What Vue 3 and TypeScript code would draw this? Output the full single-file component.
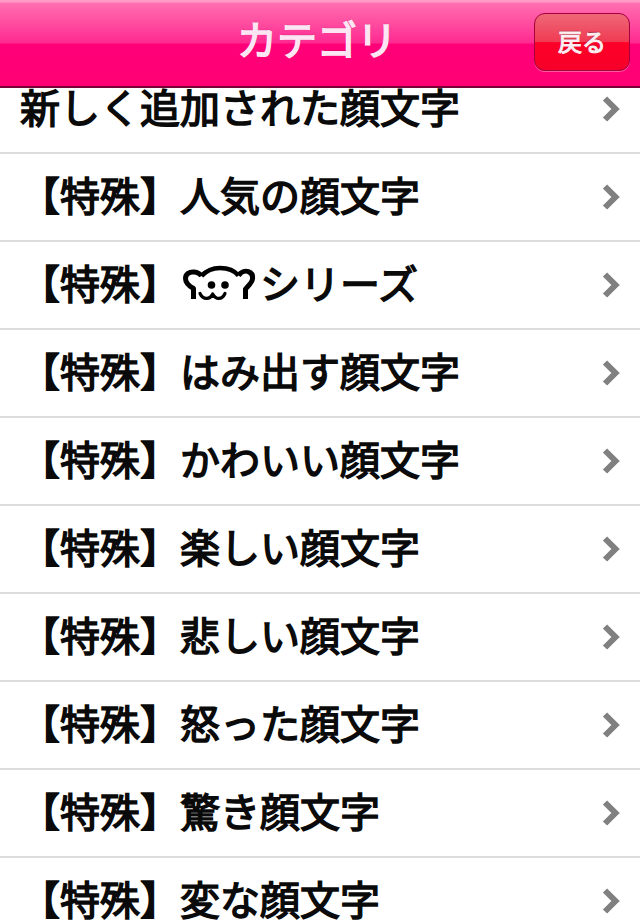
<script setup lang="ts">
const rows: string[] = [
  '【特殊】人気の顔文字',
  '【特殊】|シリーズ',
  '【特殊】はみ出す顔文字',
  '【特殊】かわいい顔文字',
  '【特殊】楽しい顔文字',
  '【特殊】悲しい顔文字',
  '【特殊】怒った顔文字',
  '【特殊】驚き顔文字',
  '【特殊】変な顔文字',
]
</script>

<template>
  <div class="page">
    <header class="bar">
      <h1 class="title">カテゴリ</h1>
      <button class="back" type="button">戻る</button>
    </header>
    <div class="viewport">
      <ul class="list">
        <li class="row">
          <span class="label">新しく追加された顔文字</span>
          <svg class="chev" viewBox="0 0 18 26"><path d="M3 2.5l10.5 10.5L3 23.5" /></svg>
        </li>
        <li v-for="r in rows" :key="r" class="row">
          <span class="label">
            <template v-if="r.includes('|')">
              {{ r.split('|')[0] }}<svg class="face" viewBox="0 0 80 40" role="img" aria-label="顔文字">
                <g fill="none" stroke="#000" stroke-linejoin="round">
                  <path stroke-width="5" d="M13.5 34V23.5C10 21.5 5.5 18.5 5.5 13.5C5.5 9 9.5 6.5 14 7C17 7.3 20 8.5 21.5 11" />
                  <path stroke-width="4.6" d="M21.5 11C27 5 34 3 40 3C47 3 54 5 58.5 10.5" />
                  <path stroke-width="5" d="M58.5 10.5C61 7 65 5.5 68 6.5C71.5 7.5 73 10 72.5 14C72 18 68 21 65.5 24V34" />
                  <path stroke-width="3.2" stroke-linecap="round" d="M20 28.5C23 35 30 35 32.7 29C36 35 42 35 45 28.5" />
                </g>
                <circle cx="31.5" cy="20" r="3.8" />
                <circle cx="45" cy="20" r="3.8" />
              </svg>{{ r.split('|')[1] }}
            </template>
            <template v-else>{{ r }}</template>
          </span>
          <svg class="chev" viewBox="0 0 18 26"><path d="M3 2.5l10.5 10.5L3 23.5" /></svg>
        </li>
      </ul>
    </div>
  </div>
</template>

<style>
html, body { margin: 0; padding: 0; background: #fff; }
</style>

<style scoped>
.page {
  width: 640px;
  height: 920px;
  overflow: hidden;
  display: flex;
  flex-direction: column;
  background: #fff;
  font-family: "Noto Sans CJK JP", sans-serif;
}
.bar {
  flex: none;
  height: 88px;
  box-sizing: border-box;
  position: relative;
  z-index: 1;
  display: flex;
  align-items: center;
  justify-content: flex-end;
  padding: 0 10px 2px 0;
  border-bottom: 2px solid #7a0038;
  background: linear-gradient(#ff9cc8 0, #ff9cc8 2px, #ff6fb0 3px, #ff2a90 43px, #ff0078 44px, #ff0074 86px);
}
.title {
  position: absolute;
  left: 237px;
  top: 5px;
  width: 160px;
  margin: 0;
  text-align: center;
  font-size: 40px;
  line-height: 66px;
  font-weight: 400;
  -webkit-text-stroke: 1.6px #fde6f4;
  color: #fde6f4;
  text-shadow: 0 -1px 1px rgba(120, 0, 60, .55);
}
.back {
  width: 96px;
  height: 58px;
  margin: 0;
  padding: 0 0 2px;
  box-sizing: border-box;
  border: 1px solid #a5003c;
  border-radius: 11px;
  background: linear-gradient(#ee6878 0, #f03a52 50%, #ff0028 51%, #f5002a 100%);
  box-shadow: 0 1px 0 rgba(255, 150, 190, .6);
  color: #fdeef2;
  font-family: inherit;
  font-size: 24px;
  font-weight: 400;
  -webkit-text-stroke: 1px #fdeef2;
  line-height: 1;
  text-shadow: 0 -1px 1px rgba(90, 0, 20, .6);
}
.viewport {
  flex: 1;
  min-height: 0;
  overflow: hidden;
}
.list {
  list-style: none;
  margin: -22px 0 0;
  padding: 0;
}
.row {
  height: 88px;
  box-sizing: border-box;
  display: flex;
  align-items: center;
  justify-content: space-between;
  padding: 0 20px;
  border-bottom: 2px solid #dcdcdc;
}
.label {
  display: flex;
  align-items: center;
  font-size: 40px;
  font-weight: 400;
  -webkit-text-stroke: 1.5px #0a0a0a;
  line-height: 60px;
  padding-bottom: 6px;
  color: #0a0a0a;
  white-space: pre;
}
.face {
  width: 80px;
  height: 40px;
  flex: none;
  margin-top: 6px;
}
.chev {
  width: 18px;
  height: 26px;
  flex: none;
  fill: none;
  stroke: #808080;
  stroke-width: 6;
}
</style>
